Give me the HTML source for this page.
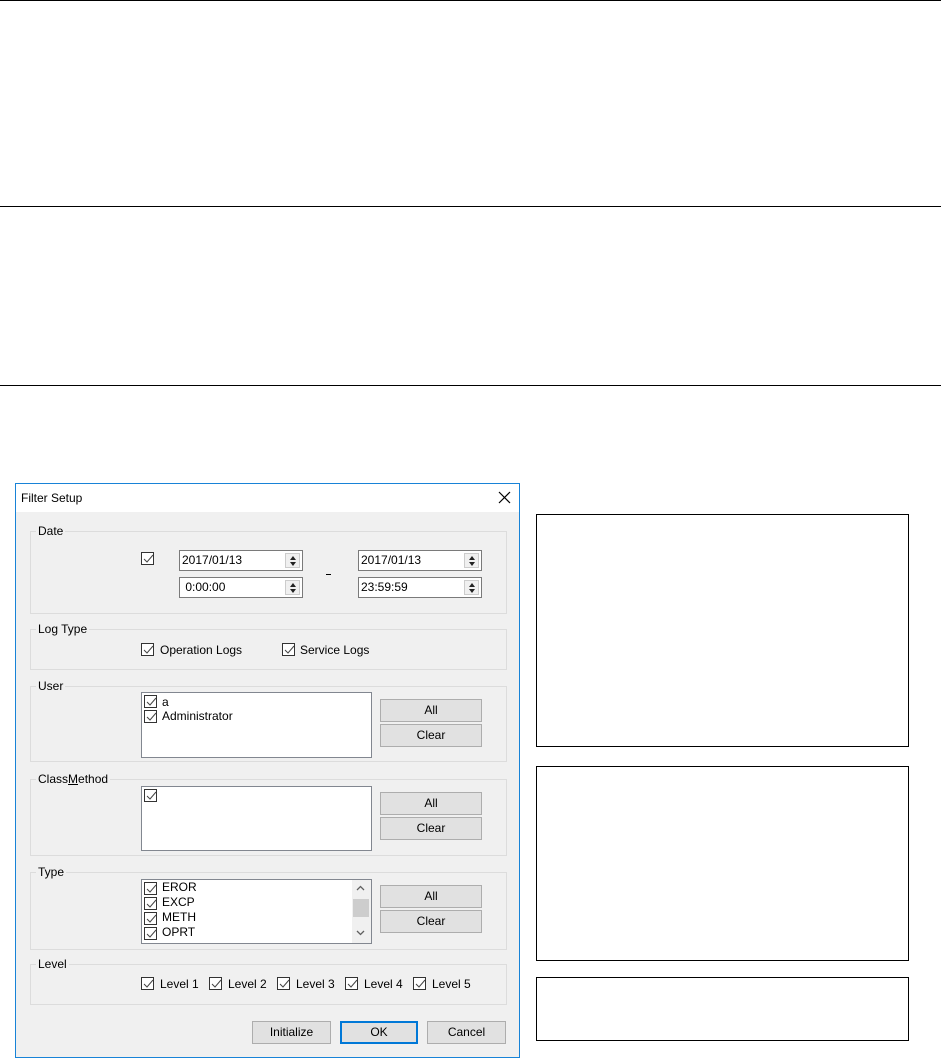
<!DOCTYPE html>
<html><head><style>
*{box-sizing:border-box;margin:0;padding:0}
body{width:941px;height:1059px;background:#fff;position:relative;font-family:"Liberation Sans",Arial,sans-serif;font-size:12px;color:#000;overflow:hidden}
.a{position:absolute}
.hl{position:absolute;left:0;width:941px;height:1px;background:#000}
.box{position:absolute;border:1px solid #000;background:#fff}
.grp{position:absolute;border:1px solid #dcdcdc}
.gl{position:absolute;background:#f0f0f0;padding:0 2px;line-height:14px}
.cb{position:absolute;width:13px;height:13px;border:1px solid #333;background:#fff}
.cb svg{position:absolute;left:0;top:0}
.inp{position:absolute;height:21px;border:1px solid #7a7a7a;background:#fff;line-height:19px;padding-left:2px}
.spin{position:absolute;right:2px;top:2px;width:15px;height:15px;background:#f0f0f0;border:1px solid #ccc}
.spin svg{position:absolute;left:3px;top:1px}
.btn{position:absolute;background:#e1e1e1;border:1px solid #adadad;text-align:center;line-height:20px}
.list{position:absolute;background:#fff;border:1px solid #828790}
.t{position:absolute;white-space:nowrap;line-height:14px}
</style></head><body>
<div class="hl" style="top:0"></div>
<div class="hl" style="top:206px"></div>
<div class="hl" style="top:385px"></div>

<div class="box" style="left:536px;top:514px;width:373px;height:233px"></div>
<div class="box" style="left:536px;top:766px;width:373px;height:195px"></div>
<div class="box" style="left:536px;top:977px;width:373px;height:64px"></div>

<div class="a" style="left:15px;top:483px;width:505px;height:575px;border:1px solid #1883d7;background:#f0f0f0">
 <div class="a" style="left:0;top:0;width:503px;height:28px;background:#fff"></div>
 <div class="t" style="left:5px;top:7px">Filter Setup</div>
 <svg class="a" style="left:482px;top:7px" width="13" height="13"><path d="M1 1L12 12M12 1L1 12" stroke="#000" stroke-width="1.2"/></svg>
</div>

<div class="grp" style="left:30px;top:531px;width:477px;height:83px"></div><div class="gl" style="left:36px;top:524px">Date</div>
<div class="grp" style="left:30px;top:629px;width:477px;height:41px"></div><div class="gl" style="left:36px;top:622px">Log Type</div>
<div class="grp" style="left:30px;top:686px;width:477px;height:76px"></div><div class="gl" style="left:36px;top:679px">User</div>
<div class="grp" style="left:30px;top:779px;width:477px;height:77px"></div><div class="gl" style="left:36px;top:772px">Class<u>M</u>ethod</div>
<div class="grp" style="left:30px;top:872px;width:477px;height:78px"></div><div class="gl" style="left:36px;top:865px">Type</div>
<div class="grp" style="left:30px;top:964px;width:477px;height:41px"></div><div class="gl" style="left:36px;top:957px">Level</div>

<div class="cb" style="left:141px;top:552px"><svg width="13" height="13"><path d="M2 6L5 9L11 2" stroke="#444" fill="none"/></svg></div>
<div class="inp" style="left:179px;top:550px;width:124px">2017/01/13<div class="spin"><svg width="8" height="12"><path d="M1 5L4 1L7 5ZM1 7L4 11L7 7Z" fill="#222"/></svg></div></div>
<div class="inp" style="left:179px;top:577px;width:124px">&nbsp;0:00:00<div class="spin"><svg width="8" height="12"><path d="M1 5L4 1L7 5ZM1 7L4 11L7 7Z" fill="#222"/></svg></div></div>
<div class="inp" style="left:358px;top:550px;width:124px">2017/01/13<div class="spin"><svg width="8" height="12"><path d="M1 5L4 1L7 5ZM1 7L4 11L7 7Z" fill="#222"/></svg></div></div>
<div class="inp" style="left:358px;top:577px;width:124px">23:59:59<div class="spin"><svg width="8" height="12"><path d="M1 5L4 1L7 5ZM1 7L4 11L7 7Z" fill="#222"/></svg></div></div>
<div class="a" style="left:326px;top:574px;width:5px;height:1px;background:#000"></div>

<div class="cb" style="left:141px;top:643px"><svg width="13" height="13"><path d="M2 6L5 9L11 2" stroke="#444" fill="none"/></svg></div>
<div class="t" style="left:160px;top:643px">Operation Logs</div>
<div class="cb" style="left:282px;top:643px"><svg width="13" height="13"><path d="M2 6L5 9L11 2" stroke="#444" fill="none"/></svg></div>
<div class="t" style="left:300px;top:643px">Service Logs</div>

<div class="list" style="left:141px;top:692px;width:231px;height:66px"></div>
<div class="cb" style="left:144px;top:695px"><svg width="13" height="13"><path d="M2 6L5 9L11 2" stroke="#444" fill="none"/></svg></div><div class="t" style="left:162px;top:695px">a</div>
<div class="cb" style="left:144px;top:710px"><svg width="13" height="13"><path d="M2 6L5 9L11 2" stroke="#444" fill="none"/></svg></div><div class="t" style="left:162px;top:709px">Administrator</div>
<div class="btn" style="left:380px;top:699px;width:102px;height:23px">All</div>
<div class="btn" style="left:380px;top:724px;width:102px;height:23px">Clear</div>

<div class="list" style="left:141px;top:786px;width:231px;height:65px"></div>
<div class="cb" style="left:144px;top:789px"><svg width="13" height="13"><path d="M2 6L5 9L11 2" stroke="#444" fill="none"/></svg></div>
<div class="btn" style="left:380px;top:792px;width:102px;height:23px">All</div>
<div class="btn" style="left:380px;top:817px;width:102px;height:23px">Clear</div>

<div class="list" style="left:141px;top:879px;width:231px;height:65px"></div>
<div class="cb" style="left:144px;top:882px"><svg width="13" height="13"><path d="M2 6L5 9L11 2" stroke="#444" fill="none"/></svg></div><div class="t" style="left:162px;top:880px">EROR</div>
<div class="cb" style="left:144px;top:897px"><svg width="13" height="13"><path d="M2 6L5 9L11 2" stroke="#444" fill="none"/></svg></div><div class="t" style="left:162px;top:895px">EXCP</div>
<div class="cb" style="left:144px;top:912px"><svg width="13" height="13"><path d="M2 6L5 9L11 2" stroke="#444" fill="none"/></svg></div><div class="t" style="left:162px;top:910px">METH</div>
<div class="cb" style="left:144px;top:927px"><svg width="13" height="13"><path d="M2 6L5 9L11 2" stroke="#444" fill="none"/></svg></div><div class="t" style="left:162px;top:925px">OPRT</div>
<div class="a" style="left:352px;top:880px;width:19px;height:63px;background:#f0f0f0"></div>
<div class="a" style="left:353px;top:899px;width:16px;height:18px;background:#cdcdcd"></div>
<svg class="a" style="left:356px;top:885px" width="9" height="6"><path d="M1 5L4.5 1.5L8 5" stroke="#606060" fill="none" stroke-width="1.3"/></svg>
<svg class="a" style="left:356px;top:930px" width="9" height="6"><path d="M1 1L4.5 4.5L8 1" stroke="#606060" fill="none" stroke-width="1.3"/></svg>
<div class="btn" style="left:380px;top:885px;width:102px;height:23px">All</div>
<div class="btn" style="left:380px;top:910px;width:102px;height:23px">Clear</div>

<div class="cb" style="left:141px;top:977px"><svg width="13" height="13"><path d="M2 6L5 9L11 2" stroke="#444" fill="none"/></svg></div><div class="t" style="left:160px;top:977px">Level 1</div>
<div class="cb" style="left:209px;top:977px"><svg width="13" height="13"><path d="M2 6L5 9L11 2" stroke="#444" fill="none"/></svg></div><div class="t" style="left:228px;top:977px">Level 2</div>
<div class="cb" style="left:277px;top:977px"><svg width="13" height="13"><path d="M2 6L5 9L11 2" stroke="#444" fill="none"/></svg></div><div class="t" style="left:296px;top:977px">Level 3</div>
<div class="cb" style="left:345px;top:977px"><svg width="13" height="13"><path d="M2 6L5 9L11 2" stroke="#444" fill="none"/></svg></div><div class="t" style="left:364px;top:977px">Level 4</div>
<div class="cb" style="left:413px;top:977px"><svg width="13" height="13"><path d="M2 6L5 9L11 2" stroke="#444" fill="none"/></svg></div><div class="t" style="left:432px;top:977px">Level 5</div>

<div class="btn" style="left:252px;top:1021px;width:79px;height:23px">Initialize</div>
<div class="btn" style="left:340px;top:1021px;width:78px;height:23px;border:2px solid #0078d7;line-height:19px">OK</div>
<div class="btn" style="left:427px;top:1021px;width:79px;height:23px">Cancel</div>
</body></html>
